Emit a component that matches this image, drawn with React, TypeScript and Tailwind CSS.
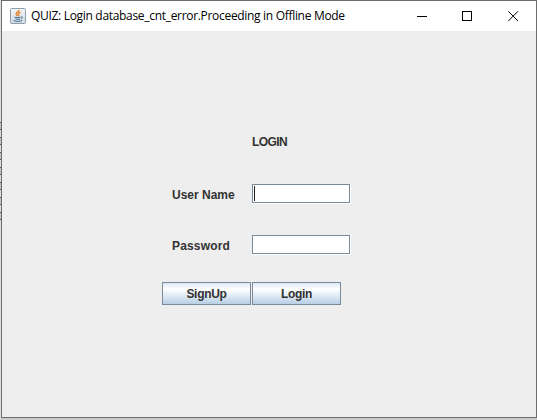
import type { ReactNode } from "react";

function JavaIcon() {
  return (
    <svg width="16" height="16" viewBox="0 0 16 16" className="shrink-0">
      <defs>
        <linearGradient id="tile" x1="0" y1="0" x2="0" y2="1">
          <stop offset="0" stopColor="#f4f6f8" />
          <stop offset="1" stopColor="#d0dbe5" />
        </linearGradient>
      </defs>
      <rect x="0.5" y="0.5" width="15" height="15" rx="1" fill="url(#tile)" stroke="#8d9daa" />
      <path d="M9.2 1.8C9.4 3.6 5.2 4.5 6.2 6.3L7.4 8M10.7 4.4C8.3 5 7.8 5.9 8.6 6.8C9 7.3 8.7 7.9 8.3 8.3" fill="none" stroke="#e5822e" strokeWidth="1.4" />
      <path d="M4.5 9.2C6 9.8 9 9.7 10.5 9.2M5.3 11C6.5 11.4 8.8 11.4 10 11M11 8.8C13.3 8.5 12.8 10.4 11 10.8M3.6 12.6C5.5 13.6 10 13.6 12 12.5" fill="none" stroke="#41698d" strokeWidth="1" />
    </svg>
  );
}

function TitleBar() {
  return (
    <header className="flex h-[30px] shrink-0 items-center bg-white pl-2">
      <JavaIcon />
      <h1 className="ml-[5px] whitespace-nowrap font-['Open_Sans','Noto_Sans',sans-serif] text-[12px] leading-4 font-normal tracking-[-0.31px] text-black">
        QUIZ: Login database_cnt_error.Proceeding in Offline Mode
      </h1>
      <div className="mr-[17px] ml-auto flex">
        <svg width="11" height="10" shapeRendering="crispEdges"><path d="M0 5.5H10" stroke="#000" /></svg>
        <svg width="10" height="10" className="mr-9 ml-[34px]" shapeRendering="crispEdges"><rect x="0.5" y="0.5" width="9" height="9" fill="none" stroke="#000" /></svg>
        <svg width="11" height="10"><path d="M0.3 0.3L10 10M10 0.3L0.3 10" stroke="#000" /></svg>
      </div>
    </header>
  );
}

function Field({ label, type, caret }: { label: string; type: string; caret?: boolean }) {
  return (
    <div className="flex h-5 items-start">
      <label className={caret ? "w-20 pt-1" : "w-20 pt-1 tracking-[0.16px]"}>{label}</label>
      <div className="flex h-5 w-[99px] border-r border-b border-white">
        <div className="relative h-[19px] w-[98px] shrink-0 border border-[#7a8a99] bg-white">
          <input type={type} aria-label={label} className="block h-full w-full bg-transparent px-1 outline-none" />
          {caret && <span className="absolute top-px left-px h-[15px] w-px bg-[#222]" />}
        </div>
      </div>
    </div>
  );
}

function Button({ children }: { children: ReactNode }) {
  return (
    <button className="h-[23px] w-[89px] border border-[#7a8a99] bg-linear-to-b from-[#dde8f3] via-white via-30% to-[#b8cfe5] pt-px leading-[21px] tracking-[-0.3px]">
      {children}
    </button>
  );
}

function BackgroundEdge() {
  return (
    <div className="flex w-px shrink-0 flex-col gap-2 bg-[#dedede] pt-[122px]">
      {[0, 1, 2, 3, 4, 5, 6].map((n) => (
        <span key={n} className="-mb-px h-2 border-y border-[#55534b] bg-[#c4c4c0]" />
      ))}
    </div>
  );
}

export default function App() {
  return (
    <div className="flex h-[420px] w-[537px] overflow-hidden bg-[#c9c9c9]">
      <BackgroundEdge />
      <main className="flex h-[418px] w-[536px] flex-col border border-[#6d6d6d] bg-[#eeeeee] font-['Liberation_Sans',Arial,sans-serif] text-[12px] leading-[14px] font-bold text-[#333]">
        <TitleBar />
        <form className="flex flex-col pt-[104px] pl-[160px]" onSubmit={(e) => e.preventDefault()}>
          <h2 className="pl-[90px] font-bold tracking-[-0.6px]">LOGIN</h2>
          <div className="mt-[35px] flex flex-col gap-[31px] pl-[10px]">
            <Field label="User Name" type="text" caret />
            <Field label="Password" type="password" />
          </div>
          <div className="mt-[27px] flex gap-px">
            <Button>SignUp</Button>
            <Button>Login</Button>
          </div>
        </form>
      </main>
    </div>
  );
}
